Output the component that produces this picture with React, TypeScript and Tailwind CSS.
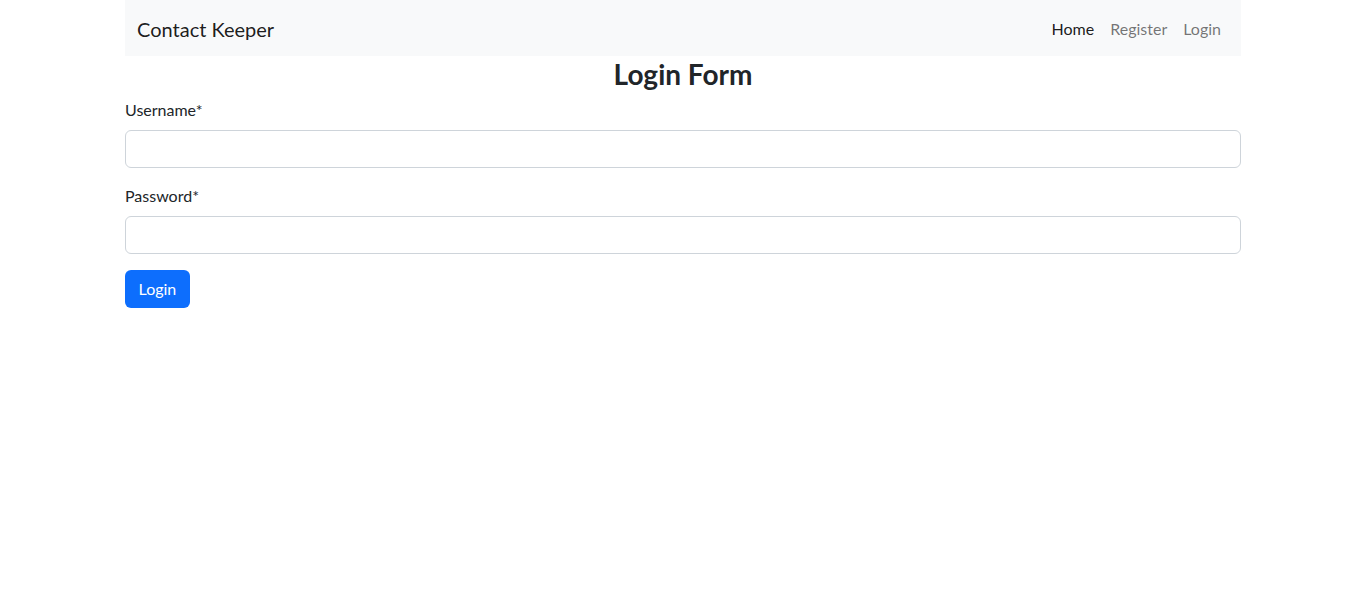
export default function App() {
  return (
    <div className="min-h-[607px] bg-white text-[#212529] font-['Lato',sans-serif] text-base">
      <div className="mx-auto w-[1116px]">
        {/* Navbar */}
        <nav className="flex h-14 items-center justify-between bg-[#f8f9fa] px-3 pt-0.5">
          <a className="text-xl leading-[30px] text-black/90">Contact Keeper</a>
          <ul className="flex items-center">
            <li>
              <a className="block px-2 py-2 leading-6 text-black/90">Home</a>
            </li>
            <li>
              <a className="block px-2 py-2 leading-6 text-black/55">Register</a>
            </li>
            <li>
              <a className="block px-2 py-2 leading-6 text-black/55">Login</a>
            </li>
          </ul>
        </nav>

        {/* Form */}
        <h3 className="mb-1.5 pt-0.5 text-center text-[28px] font-bold leading-[1.2]">Login Form</h3>
        <form>
          <div className="mb-4">
            <label className="mb-2 block leading-6">Username*</label>
            <input
              type="text"
              className="block h-[38px] w-full rounded-md border border-[#ced4da] px-3 py-1.5"
            />
          </div>
          <div className="mb-4">
            <label className="mb-2 block leading-6">Password*</label>
            <input
              type="password"
              className="block h-[38px] w-full rounded-md border border-[#ced4da] px-3 py-1.5"
            />
          </div>
          <button
            type="button"
            className="h-[38px] rounded-md bg-[#0d6efd] px-[13.5px] leading-6 text-white"
          >
            Login
          </button>
        </form>
      </div>
    </div>
  );
}
